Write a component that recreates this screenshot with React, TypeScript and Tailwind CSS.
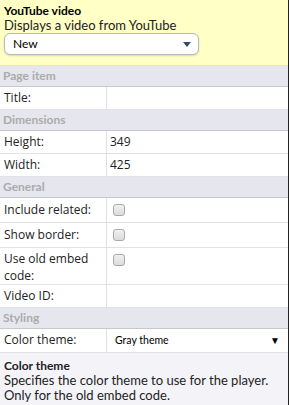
import React from "react";

type Row = { label: string; value?: string; kind?: "text" | "check" | "select"; tall?: boolean };
type Section = { title: string; rows: Row[] };

const sections: Section[] = [
  { title: "Page item", rows: [{ label: "Title:" }] },
  {
    title: "Dimensions",
    rows: [
      { label: "Height:", value: "349" },
      { label: "Width:", value: "425" },
    ],
  },
  {
    title: "General",
    rows: [
      { label: "Include related:", kind: "check" },
      { label: "Show border:", kind: "check" },
      { label: "Use old embed code:", kind: "check", tall: true },
      { label: "Video ID:" },
    ],
  },
  { title: "Styling", rows: [{ label: "Color theme:", value: "Gray theme", kind: "select" }] },
];

const Checkbox = () => (
  <div className="w-[12px] h-[12px] rounded-[3px] border border-[#a9a9a9] bg-gradient-to-b from-[#f0f0f0] to-[#dcdcdc]" />
);

// row heights include the bottom border
const rowHeight = (row: Row) => {
  if (row.tall) return "h-[37px]";
  if (row.kind === "check") return "h-[25px]";
  if (row.kind === "select") return "h-[24px]";
  return "h-[23px]";
};

const PropRow = ({ row }: { row: Row }) => (
  <div className={`flex border-b border-[#e2e2e6] bg-white ${rowHeight(row)}`}>
    <div
      className={`w-[107px] shrink-0 border-r border-[#e2e2e6] pl-[4px] pr-[6px] ${
        row.tall ? "pt-[2px] leading-[17px]" : row.kind === "check" ? "leading-[24px]" : "leading-[22px]"
      }`}
    >
      {row.label}
    </div>
    <div className="flex-1 flex items-start pl-[6px] pr-[6px]">
      {row.kind === "check" && (
        <div className="pt-[6px]">
          <Checkbox />
        </div>
      )}
      {row.kind === "select" && (
        <div className="flex w-full items-center justify-between h-[23px] font-['Lato',sans-serif] text-[10.5px] text-black">
          <span className="pl-[2px]">{row.value}</span>
          <span className="text-[10px] pr-[2px]">▼</span>
        </div>
      )}
      {!row.kind && row.value && <span className="leading-[22px] text-[12px] -ml-[3px]">{row.value}</span>}
    </div>
  </div>
);

export default function App() {
  return (
    <div className="w-[289px] h-[405px] overflow-hidden bg-[#f4f4f8] border-r border-[#222] text-[#222] font-['Open_Sans',sans-serif] text-[12px]">
      <div className="bg-[#ffffc6] px-[4px] pt-[3px] pb-[10px] border-b border-[#e8e8c0] font-['Lato',sans-serif]">
        <div className="font-bold text-[12px] leading-[15px] text-black">YouTube video</div>
        <div className="text-[13px] leading-[15px] text-[#222]">Displays a video from YouTube</div>
        <div className="w-[195px] h-[22px] rounded-[6px] border border-[#b9b9b9] bg-white shadow-[0_1px_2px_rgba(0,0,0,0.15)] flex items-center justify-between pl-[8px] pr-[7px]">
          <span className="text-[12px] text-black">New</span>
          <svg width="8" height="5" viewBox="0 0 8 5">
            <path d="M0 0H8L4 5Z" fill="#3b4a64" />
          </svg>
        </div>
      </div>
      {sections.map((s) => (
        <div key={s.title}>
          <div className="h-[21px] leading-[20px] bg-[#e6e6ee] border-b border-[#c8c8cc] px-[3px] font-['Lato',sans-serif] font-bold text-[12px] text-[#ababab]">
            {s.title}
          </div>
          {s.rows.map((r) => (
            <PropRow key={r.label} row={r} />
          ))}
        </div>
      ))}
      <div className="px-[4px] pt-[5px] font-['Lato',sans-serif] text-[13px] leading-[15px] text-[#222]">
        <div className="font-bold text-[12px]">Color theme</div>
        <div>Specifies the color theme to use for the player.</div>
        <div>Only for the old embed code.</div>
      </div>
    </div>
  );
}
